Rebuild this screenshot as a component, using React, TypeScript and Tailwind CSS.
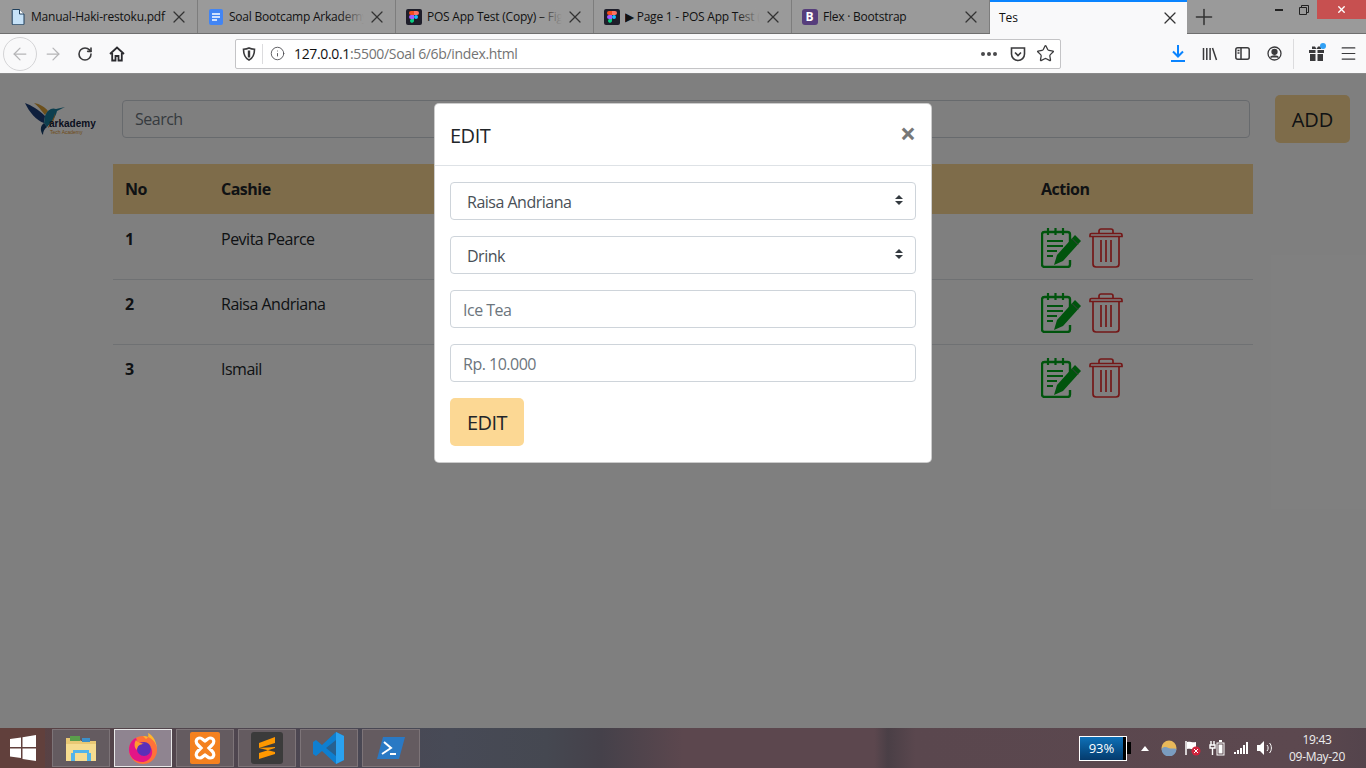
import React from "react";
import { ArrowLeft, ArrowRight, RotateCw, Info, Star, X, Plus, Menu } from "lucide-react";

const font = { fontFamily: '"Open Sans", "Noto Sans", "Liberation Sans", sans-serif' };

function FileIcon() {
  return (
    <svg width="14" height="16" viewBox="0 0 14 16" className="shrink-0">
      <path d="M2 .5h6.500L13 5v10a.8.8 0 0 1-.8.8H2a.8.8 0 0 1-.8-.8V1.300A.8.8 0 0 1 2 .5z" fill="#c6e2f8" stroke="#1f3f5c" />
      <path d="M8.500 .5V5H13" fill="#fff" stroke="#1f3f5c" />
    </svg>
  );
}
function DocsIcon() {
  return (
    <svg width="16" height="16" viewBox="0 0 16 16" className="shrink-0">
      <rect x="1" y="0" width="14" height="16" rx="2" fill="#4285f4" />
      <path d="M4 5h8M4 8h8M4 11h5" stroke="#fff" strokeWidth="1.500" />
    </svg>
  );
}
function FigmaIcon() {
  return (
    <svg width="16" height="16" viewBox="0 0 16 16" className="shrink-0">
      <rect width="16" height="16" rx="2" fill="#1e1e2a" />
      <path d="M5 2h3v4H5a2 2 0 0 1 0-4z" fill="#f24e1e" />
      <path d="M8 2h3a2 2 0 0 1 0 4H8z" fill="#ff7262" />
      <path d="M5 6h3v4H5a2 2 0 0 1 0-4z" fill="#a259ff" />
      <circle cx="10" cy="8" r="2" fill="#1abcfe" />
      <path d="M5 10h3v2a2 2 0 1 1-3-2z" fill="#0acf83" />
    </svg>
  );
}
function BootstrapIcon() {
  return (
    <div className="w-4 h-4 rounded-[3px] bg-[#563d7c] text-white text-[12px] font-bold flex items-center justify-center shrink-0 leading-none">B</div>
  );
}

function Tab({ icon, title, fade }: { icon: React.ReactNode; title: string; fade?: boolean }) {
  return (
    <div className="w-[198px] h-full flex items-center pl-[10px] pr-[11px] gap-[6px] border-r border-[#7d7d7d] relative">
      <div className="w-[15px] flex justify-center shrink-0">{icon}</div>
      <div className="flex-1 min-w-0 overflow-hidden whitespace-nowrap text-[12px] tracking-[-0.22px] text-[#111] relative">
        {title}
        {fade && <div className="absolute right-0 top-0 bottom-0 w-6 bg-gradient-to-r from-transparent to-[#9a9a9a]" />}
      </div>
      <X size={20} strokeWidth={1.500} className="text-[#333] shrink-0 -mx-[3px]" />
    </div>
  );
}

function Tabs() {
  return (
    <div className="h-[34px] bg-[#9a9a9a] flex items-stretch border-b border-[#6f6f6f] relative">
      <Tab icon={<FileIcon />} title="Manual-Haki-restoku.pdf" />
      <Tab icon={<DocsIcon />} title="Soal Bootcamp Arkademy" fade />
      <Tab icon={<FigmaIcon />} title="POS App Test (Copy) – Figma" fade />
      <Tab icon={<FigmaIcon />} title="▶ Page 1 - POS App Test (Copy)" fade />
      <Tab icon={<BootstrapIcon />} title="Flex · Bootstrap" />
      <div className="w-[197px] h-[34px] bg-[#f9f9fa] border-t-2 border-[#0a84ff] flex items-center pl-[9px] pr-[10px] text-[12px] text-[#111]">
        <div className="flex-1">Tes</div>
        <X size={20} strokeWidth={1.500} className="text-[#333] -mx-[3px]" />
      </div>
      <div className="w-[34px] flex items-center justify-center">
        <Plus size={26} strokeWidth={1.400} className="text-[#333]" />
      </div>
      <div className="flex-1" />
      <div className="flex h-[19px]">
        <div className="w-[25px] flex items-center justify-center"><div className="w-2 h-[2px] bg-[#222]" /></div>
        <div className="w-[26px] flex items-center justify-center">
          <svg width="10" height="10" viewBox="0 0 10 10" fill="none" stroke="#222"><path d="M.5 2.500h7v7h-7zM2.500 2.500v-2h7v7h-2" /></svg>
        </div>
        <div className="w-[49px] bg-[#c75050] flex items-center justify-center">
          <X size={11} strokeWidth={3} className="text-white" />
        </div>
      </div>
    </div>
  );
}

function ToolbarIconSlot({ children, w = 32 }: { children: React.ReactNode; w?: number }) {
  return <div className="flex items-center justify-center shrink-0" style={{ width: w }}>{children}</div>;
}

function Toolbar() {
  return (
    <div className="h-[40px] bg-[#f9f9fa] border-b border-[#8a8a8a] flex items-center pl-[3px] text-[#3a3a3c]">
      <div className="w-[34px] h-[34px] rounded-full border border-[#d4d4d6] flex items-center justify-center shrink-0">
        <ArrowLeft size={20} strokeWidth={1.500} className="text-[#b5b5b7]" />
      </div>
      <ToolbarIconSlot w={32}><ArrowRight size={20} strokeWidth={1.500} className="text-[#b5b5b7]" /></ToolbarIconSlot>
      <ToolbarIconSlot w={32}><RotateCw size={16} strokeWidth={2.400} /></ToolbarIconSlot>
      <ToolbarIconSlot w={32}>
        <svg width="16" height="16" viewBox="0 0 16 16" fill="none" stroke="#2a2a2e" strokeWidth="1.800"><path d="M1 8l7-6.500L15 8M3.200 7v7.500h3.300V10h3v4.500h3.300V7" /></svg>
      </ToolbarIconSlot>
      <div className="w-[102px] shrink-0" />
      <div className="w-[826px] h-[30px] bg-white border border-[#c4c4c6] rounded-[2px] flex items-center shrink-0 pl-[6px]">
        <svg width="14" height="14" viewBox="0 0 14 14" fill="none" stroke="#3a3a3c" strokeWidth="1.600" className="shrink-0"><path d="M7 1c2 1 3.500 1.200 5.500 1.200 0 5-1.500 8.800-5.500 10.800-4-2-5.500-5.800-5.500-10.800C3.500 2.200 5 2 7 1z" /><path d="M7 3.500v7" strokeWidth="2.400" /></svg>
        <div className="w-px h-[20px] bg-[#dcdcde] ml-[6px] mr-[7px]" />
        <Info size={15} strokeWidth={1.400} className="text-[#4a4a4f] shrink-0" />
        <div className="ml-[9px] flex-1 text-[14px] whitespace-nowrap text-[#737373] tracking-[-0.34px]"><span className="text-[#111]">127.0.0.1</span>:5500/Soal 6/6b/index.html</div>
        <div className="flex gap-[2px] mr-[13px]">
          <span className="w-[4px] h-[4px] rounded-full bg-[#4a4a4c]" /><span className="w-[4px] h-[4px] rounded-full bg-[#4a4a4c]" /><span className="w-[4px] h-[4px] rounded-full bg-[#4a4a4c]" />
        </div>
        <svg width="16" height="16" viewBox="0 0 16 16" fill="none" stroke="#3a3a3c" strokeWidth="1.600" className="mr-[10px]"><path d="M1.500 2h13v6a6.500 6.500 0 0 1-13 0z" /><path d="M5 6.500l3 3 3-3" /></svg>
        <Star size={19} strokeWidth={1.600} className="-mr-[1px]" />
        <div className="w-[6px]" />
      </div>
      <div className="w-[101px] shrink-0" />
      <ToolbarIconSlot w={32}>
        <svg width="14" height="17" viewBox="0 0 14 17" fill="none" stroke="#0a84ff" strokeWidth="2"><path d="M7 0v11M2 6.500L7 11.500l5-5M0 16h14" /></svg>
      </ToolbarIconSlot>
      <ToolbarIconSlot w={32}>
        <svg width="16" height="14" viewBox="0 0 16 14" fill="none" stroke="#3a3a3c" strokeWidth="1.500"><path d="M1.500 1v12M4.800 1v12M8.100 1v12M10.500 1l4 12" /></svg>
      </ToolbarIconSlot>
      <ToolbarIconSlot w={32}>
        <svg width="15" height="13" viewBox="0 0 15 13" fill="none" stroke="#3a3a3c" strokeWidth="1.500"><rect x=".8" y=".8" width="13.400" height="11.400" rx="2" /><path d="M6 1v11M2.500 3.500h2M2.500 6h2" /></svg>
      </ToolbarIconSlot>
      <ToolbarIconSlot w={32}>
        <svg width="15" height="15" viewBox="0 0 15 15" fill="none" stroke="#3a3a3c" strokeWidth="1.300"><circle cx="7.500" cy="7.500" r="6.500" /><circle cx="7.500" cy="5.800" r="2.500" fill="#3a3a3c" /><path d="M3.500 11.500c1-2 7-2 8 0" fill="#3a3a3c" /></svg>
      </ToolbarIconSlot>
      <div className="w-px h-[30px] bg-[#dcdcde] ml-[3px] mr-[12px] shrink-0" />
      <div className="w-[20px] shrink-0 flex items-center justify-center relative">
        <svg width="15" height="15" viewBox="0 0 15 15" fill="#3a3a3c"><path d="M0 4h6.500v3H0zM8.500 4H15v3H8.500zM1 8h5.500v7H1zM8.500 8H14v7H8.500zM3 .5h3l1.500 2.500H3zM12 .5H9L7.500 3H12z" /></svg>
        <span className="absolute -top-[3px] right-[0px] w-[6px] h-[6px] rounded-full bg-[#30a0f5]" />
      </div>
      <div className="w-[12px] shrink-0" />
      <ToolbarIconSlot w={20}><Menu size={19} strokeWidth={1.500} /></ToolbarIconSlot>
    </div>
  );
}

function Bird() {
  return (
    <svg width="40" height="34" viewBox="0 0 40 34" className="shrink-0">
      <path d="M0 1C6 3 14 8 20 14l-1 7C12 19 4 10 0 1z" fill="#1d3f7a" />
      <path d="M9 1c6 1 11 4 14 8l-3 4C16 8 13 4 9 1z" fill="#d9a038" />
      <path d="M20 14c2-6 7-9 11-7l9-2-8 4c-1 5-5 11-10 16l-3-4z" fill="#1b7f9e" />
      <path d="M23 25c3-4 6-9 7-14 0 5-2 11-7 15z" fill="#e08a2c" />
      <path d="M19 21l3 4c-3 2-4 5-4 8-3-4-3-9 1-12z" fill="#17406e" />
    </svg>
  );
}

function Logo() {
  return (
    <div className="w-[72px] h-[34px] relative shrink-0 tracking-normal">
      <Bird />
      <div className="absolute left-[24px] top-[15px] text-[10px] font-bold text-[#14213d] leading-[14px]" style={{ fontFamily: '"Liberation Sans", sans-serif' }}>arkademy</div>
      <div className="absolute left-[25px] top-[27px] text-[5px] text-[#e0962c] leading-[6px]" style={{ fontFamily: '"Liberation Sans", sans-serif' }}>Tech Academy</div>
    </div>
  );
}

function EditIcon() {
  return (
    <svg width="40" height="40" viewBox="0 0 40 40" fill="none" className="shrink-0">
      <path d="M29 17V6.500a2.500 2.500 0 0 0-2.500-2.500h-23A2.500 2.500 0 0 0 1 6.500v30A2.500 2.500 0 0 0 3.500 39h23a2.500 2.500 0 0 0 2.500-2.500V32" stroke="#00a81a" strokeWidth="2.400" />
      <path d="M7 0v7M14.500 0v7M22 0v7" stroke="#00a81a" strokeWidth="2.200" />
      <path d="M6 13h16M6 18h16M6 23h10M6 28h6" stroke="#00a81a" strokeWidth="2.200" />
      <path d="M34 7l6 6-18 20-9 4 3-10z" fill="#00a81a" />
      <path d="M31 10.500l6 6" stroke="#808080" strokeWidth="1" />
    </svg>
  );
}

function TrashIcon() {
  return (
    <svg width="34" height="40" viewBox="0 0 34 40" fill="none" stroke="#e83030" strokeWidth="1.700" className="shrink-0">
      <path d="M1 7a1.500 1.500 0 0 1 1.500-1.500h29A1.500 1.500 0 0 1 33 7v1.500H1z" />
      <path d="M10 5V3a2 2 0 0 1 2-2h10a2 2 0 0 1 2 2v2" />
      <path d="M4 9v27a3 3 0 0 0 3 3h20a3 3 0 0 0 3-3V9" />
      <path d="M12 12v22M17 12v22M22 12v22" />
    </svg>
  );
}

const rows = [
  { no: 1, name: "Pevita Pearce" },
  { no: 2, name: "Raisa Andriana" },
  { no: 3, name: "Ismail" },
];

function Carets() {
  return (
    <svg width="8" height="10" viewBox="0 0 8 10" fill="#343a40" className="shrink-0 -mt-[2px]">
      <path d="M4 0l4 4H0zM4 10L0 6h8z" />
    </svg>
  );
}

function Page() {
  return (
    <div className="flex-1 bg-white relative overflow-hidden text-[#212529] text-[16px] tracking-[-0.5px]">
      <div className="flex items-center pt-[21px] pl-[25px] pr-[16px]">
        <Logo />
        <input placeholder="Search" className="ml-[25px] flex-1 h-[38px] border border-[#ced4da] rounded-[4px] px-3 text-[16px] placeholder:text-[#6c757d] bg-white" />
        <button className="ml-[25px] w-[75px] h-[48px] pt-[2px] rounded-[5px] bg-[#fcd894] text-[20px] text-[#212529] tracking-normal">ADD</button>
      </div>
      <table className="mt-[21px] ml-[113px] w-[1140px] border-collapse table-fixed">
        <colgroup><col className="w-[96px]" /><col /><col className="w-[224px]" /></colgroup>
        <thead>
          <tr className="h-[50px] bg-[#fcd894] font-bold text-left">
            <th className="px-3">No</th>
            <th className="px-3">Cashie</th>
            <th className="px-3">Action</th>
          </tr>
        </thead>
        <tbody>
          {rows.map((r, i) => {
            const pad = i === 0 ? "px-3 pt-[13px] pb-[12px]" : "px-3 pt-[12px] pb-[12px]";
            return (
              <tr key={r.no} className={i < 2 ? "border-b border-[#dee2e6]" : ""}>
                <td className={pad + " align-top font-bold"}>{r.no}</td>
                <td className={pad + " align-top"}>{r.name}</td>
                <td className={pad}>
                  <div className="flex gap-[8px] h-[40px] pt-[1px]"><EditIcon /><TrashIcon /></div>
                </td>
              </tr>
            );
          })}
        </tbody>
      </table>
      <div className="absolute inset-0 bg-black/50 flex justify-center items-start pt-[29px]">
        <div className="w-[498px] bg-white rounded-[5px] border border-black/20 flex flex-col">
          <div className="h-[62px] border-b border-[#dee2e6] flex items-center justify-between pl-[15px] pr-[16px]">
            <div className="text-[20px] text-[#212529] pt-[2px]">EDIT</div>
            <div className="text-[28px] font-bold text-[#777] leading-none -mt-[3px] mr-[-1px] tracking-normal">×</div>
          </div>
          <div className="px-[15px] pt-[16px] pb-[16px] flex flex-col gap-[16px]">
            {["Raisa Andriana", "Drink"].map((t) => (
              <div key={t} className="h-[38px] border border-[#ced4da] rounded-[4px] flex items-center justify-between pl-[16px] pr-[12px] text-[#495057]">
                <span className="pt-[2px]">{t}</span>
                <Carets />
              </div>
            ))}
            <input placeholder="Ice Tea" className="h-[38px] border border-[#ced4da] rounded-[4px] px-3 pt-[2px] text-[16px] placeholder:text-[#6c757d]" />
            <input placeholder="Rp. 10.000" className="h-[38px] border border-[#ced4da] rounded-[4px] px-3 pt-[2px] text-[16px] placeholder:text-[#6c757d]" />
            <button className="w-[74px] h-[48px] pt-[2px] rounded-[5px] bg-[#fcd894] text-[20px] text-[#212529]">EDIT</button>
          </div>
        </div>
      </div>
    </div>
  );
}

function TaskBtn({ children, active }: { children: React.ReactNode; active?: boolean }) {
  return (
    <div className={"w-[58px] h-[38px] flex items-center justify-center shrink-0 border " + (active ? "border-[#e8e8e8] bg-[#8f8490]" : "border-[#7d7478] bg-[#645b60]")}>
      {children}
    </div>
  );
}

function Taskbar() {
  return (
    <div className="h-[40px] flex items-center text-white bg-[linear-gradient(90deg,#5c4040_0%,#54444a_8%,#4a4753_25%,#474a56_33%,#454851_40%,#45414a_44%,#5c474e_50%,#5c474e_64%,#4a3f46_65%,#5a474e_67%,#5c484f_95%,#54444c_100%)]">
      <div className="w-[45px] h-full bg-[#61403c] flex items-center justify-center shrink-0">
        <svg width="26" height="26" viewBox="0 0 26 26" fill="#fff"><path d="M0 4l11-1.500V12H0zM12.500 2.300L26 0v12H12.500zM0 13.500h11V23L0 21.500zM12.500 13.500H26V26l-13.500-2z" /></svg>
      </div>
      <div className="w-[7px] shrink-0" />
      <div className="flex gap-[4px]">
        <TaskBtn>
          <svg width="32" height="32" viewBox="0 0 32 32"><path d="M1 6h12l3 3h15v20H1z" fill="#e9c874" /><path d="M1 12h30v17H1z" fill="#f6dc90" /><path d="M5 4h10v5H5z" fill="#5a9e4b" /><path d="M17 6h8v4h-8z" fill="#3c8fc9" /><path d="M8 18h16v3H8zM6 21h4v8H6zM22 21h4v8h-4z" fill="#52b4ea" /></svg>
        </TaskBtn>
        <TaskBtn active>
          <svg width="32" height="32" viewBox="0 0 32 32"><circle cx="16" cy="18" r="14" fill="#ff7139" /><path d="M16 4c7 0 14 6 14 14 0-8-4-15-9-17 1 3 0 5-2 6z" fill="#ffb52e" /><path d="M2 18C2 11 6 7 9 6l2 5c3-2 6 0 7 1-5 0-7 3-7 6 0 4 4 6 8 5s6-5 4-9c5 6 1 16-8 16-7 0-13-5-13-12z" fill="#e31587" /><circle cx="17" cy="17" r="7" fill="#5b2fb8" /><path d="M9 8c2 3 6 3 8 4-4 0-7 2-7 6-3-2-3-7-1-10z" fill="#ff9a2e" /></svg>
        </TaskBtn>
        <TaskBtn>
          <div className="w-[30px] h-[32px] bg-[#f4811f] rounded-[2px] flex items-center justify-center">
            <svg width="22" height="24" viewBox="0 0 22 24" fill="none" stroke="#fff" strokeWidth="3.200"><path d="M6 2C2 2 1 6 4 9l3 3-3 3c-3 3-2 7 2 7 2 0 3-2 5-3 2 1 3 3 5 3 4 0 5-4 2-7l-3-3 3-3c3-3 2-7-2-7-2 0-3 2-5 3-2-1-3-3-5-3z" /></svg>
          </div>
        </TaskBtn>
        <TaskBtn>
          <div className="w-[32px] h-[32px] bg-[#3b3b3b] rounded-[3px] flex items-center justify-center">
            <svg width="18" height="22" viewBox="0 0 18 22" fill="#ff9800"><path d="M17 0v6L1 11V6zM1 11l16 4v-5zM17 11v6L1 22v-6z" /></svg>
          </div>
        </TaskBtn>
        <TaskBtn>
          <svg width="32" height="34" viewBox="0 0 32 34"><path d="M23 1l8 4v24l-8 4-14-13-6 5-3-2V11l3-2 6 5z" fill="#0e7fd0" /><path d="M23 9L13 17l10 8z" fill="#3e4452" fillOpacity="0.500" /><path d="M23 1l8 4v24l-8 4z" fill="#2aa2f0" /></svg>
        </TaskBtn>
        <TaskBtn>
          <svg width="28" height="24" viewBox="0 0 28 24"><path d="M6 1h22l-6 22H0z" fill="#2a79c4" /><path d="M7 6l7 6-9 6" fill="none" stroke="#fff" strokeWidth="2" /><path d="M13 18h6" stroke="#fff" strokeWidth="2" /></svg>
        </TaskBtn>
      </div>
      <div className="flex-1" />
      <div className="w-[48px] h-[25px] border border-white flex shrink-0">
        <div className="flex-1 bg-gradient-to-b from-[#0e71b8] to-[#053b6d] text-[13px] text-center leading-[23px]">93%</div>
        <div className="w-[3px] bg-black" />
      </div>
      <div className="w-[4px] h-[12px] bg-black shrink-0" />
      <div className="w-[10px] shrink-0" />
      <svg width="8" height="5" viewBox="0 0 8 5" fill="#fff" className="shrink-0"><path d="M4 0l4 5H0z" /></svg>
      <div className="w-[12px] shrink-0" />
      <svg width="16" height="16" viewBox="0 0 16 16" className="shrink-0"><circle cx="8" cy="8" r="7.500" fill="#e8b85a" /><path d="M.5 9c2-3 5-2 7-1s6 0 8 1a7.500 7.500 0 0 1-15 0z" fill="#7a9cc0" /></svg>
      <div className="w-[8px] shrink-0" />
      <svg width="16" height="16" viewBox="0 0 16 16" className="shrink-0"><path d="M1 1v14" stroke="#fff" strokeWidth="1.500" /><path d="M2 2c3-1 5 1 9 0v7c-4 1-6-1-9 0z" fill="#fff" /><circle cx="11" cy="11" r="4.500" fill="#d0243c" /><path d="M9 9l4 4M13 9l-4 4" stroke="#fff" /></svg>
      <div className="w-[8px] shrink-0" />
      <svg width="16" height="16" viewBox="0 0 16 16" fill="none" stroke="#fff" className="shrink-0"><rect x="8" y="3" width="7" height="12" /><path d="M10 1h3" strokeWidth="2" /><rect x="10" y="5" width="3" height="8" fill="#fff" /><path d="M2 1v4M5 1v4M1 5h5v3H1zM3.500 8v7" strokeWidth="1.400" /></svg>
      <div className="w-[8px] shrink-0" />
      <svg width="16" height="14" viewBox="0 0 16 14" fill="#fff" className="shrink-0"><path d="M1 11h2v2H1zM4 9h2v4H4zM7 7h2v6H7zM10 4h2v9h-2zM13 1h2v12h-2z" /></svg>
      <div className="w-[8px] shrink-0" />
      <svg width="16" height="14" viewBox="0 0 16 14" fill="#fff" className="shrink-0"><path d="M0 4h3l4-4v14l-4-4H0z" /><path d="M10 4c1.500 1.500 1.500 4.500 0 6M12.500 2c2.500 2.500 2.500 7.500 0 10" fill="none" stroke="#fff" /></svg>
      <div className="w-[76px] shrink-0 text-center text-[12px] leading-[17px] text-[#eee] tracking-[-0.3px] ml-[6px] mr-[11px]">
        <div>19:43</div>
        <div>09-May-20</div>
      </div>
    </div>
  );
}

export default function App() {
  return (
    <div className="w-[1366px] h-[768px] flex flex-col overflow-hidden" style={font}>
      <Tabs />
      <Toolbar />
      <Page />
      <Taskbar />
    </div>
  );
}
